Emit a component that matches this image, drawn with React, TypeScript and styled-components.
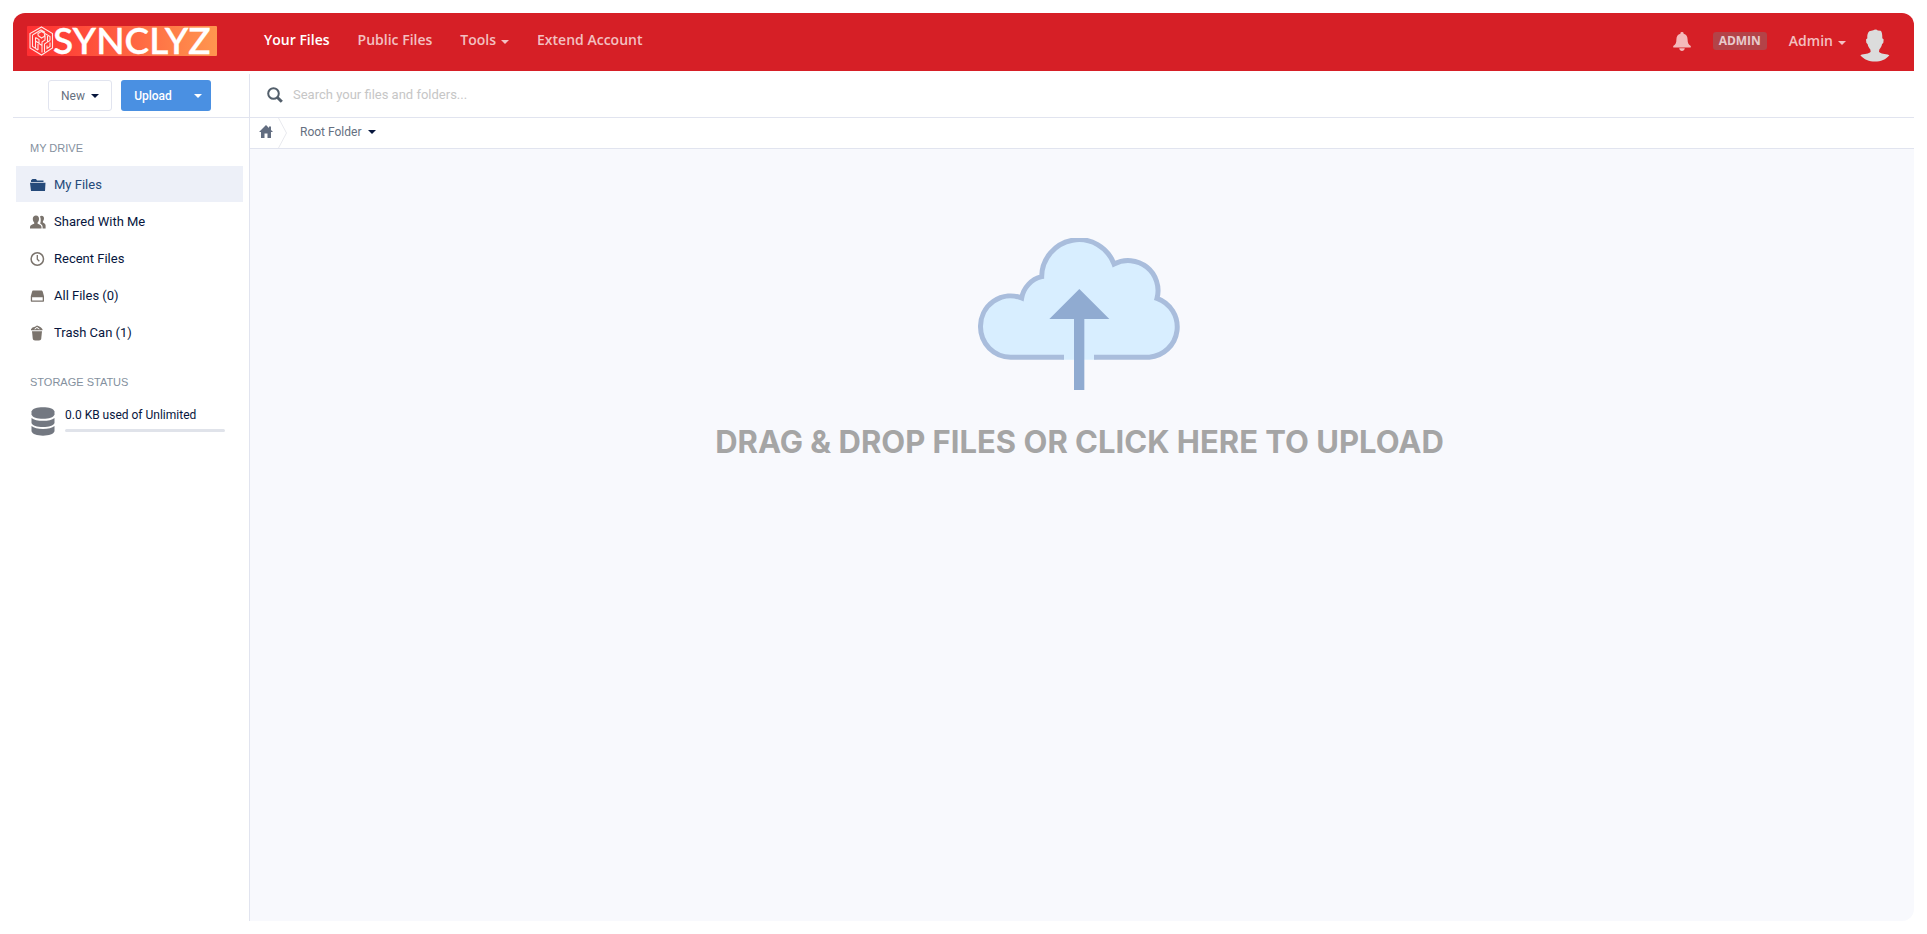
import React from "react";
import styled, { createGlobalStyle } from "styled-components";

const color = {
  red: "#d61f26",
  line: "#e1e4ef",
  navy: "#07163d",
  slate: "#667080",
  blue: "#4a90e2",
};

const body = `Roboto, "Liberation Sans", sans-serif`;
const heading = `Inter, Roboto, sans-serif`;
const menu = `"Open Sans", Roboto, sans-serif`;

const GlobalStyle = createGlobalStyle`
  *, *::before, *::after { box-sizing: border-box; }
  body { margin: 0; background: #fff; color: ${color.navy}; font: 13px/20px ${body}; }
  a { color: inherit; text-decoration: none; }
  button { margin: 0; padding: 0; border: 0; background: none; color: inherit; font: inherit; cursor: pointer; }
  ul { margin: 0; padding: 0; list-style: none; }
  svg { display: block; flex: none; }
`;

const Page = styled.div`
  display: flex;
  flex-direction: column;
  min-height: 100vh;
  padding: 13px;
`;

const Header = styled.header`
  display: flex;
  align-items: center;
  height: 58px;
  padding: 0 24px 2px 14px;
  border-radius: 12px 12px 0 0;
  background: ${color.red};
  color: rgba(255, 255, 255, 0.72);
  font: 600 14px/20px ${menu};
`;

const LogoLink = styled.a`
  width: 190px;

  svg { overflow: visible; }
`;

const Nav = styled.nav`
  display: flex;
  gap: 28px;
  margin-left: 47px;
  padding-bottom: 2px;
`;

const NavLink = styled.a<{ $active?: boolean }>`
  color: ${(p) => (p.$active ? "#fff" : "inherit")};
`;

const MenuButton = styled.button`
  display: flex;
  align-items: center;
  gap: 5px;
`;

const Caret = styled.span<{ $tone?: string }>`
  width: 0;
  height: 0;
  border: 4px solid transparent;
  border-top-color: ${(p) => p.$tone ?? "currentColor"};
  border-bottom: 0;

  ${Header} & { margin-top: 4px; }
`;

const Account = styled.div`
  display: flex;
  align-items: center;
  gap: 22px;
  margin-left: auto;
`;

const Badge = styled.span`
  padding: 0 6px;
  border-radius: 3px;
  background: #b34348;
  color: #e8cbcd;
  font: 700 12px/18px ${menu};
`;

const AvatarButton = styled.button`
  margin: 8px 0 0 -8px;
`;

const Body = styled.div`
  display: grid;
  flex: 1;
  grid-template-columns: 236px minmax(0, 1fr);
  padding-top: 3px;
`;

const Sidebar = styled.aside`
  display: flex;
  flex-direction: column;
`;

const Actions = styled.div`
  display: flex;
  justify-content: center;
  gap: 9px;
  height: 44px;
  padding: 6px 3px 0 0;
  border-bottom: 1px solid ${color.line};
  font-size: 12px;
`;

const NewButton = styled.button`
  display: flex;
  align-items: center;
  justify-content: center;
  gap: 6px;
  width: 64px;
  height: 31px;
  border: 1px solid ${color.line};
  border-radius: 3px;
  color: ${color.slate};
`;

const UploadGroup = styled.div`
  display: flex;
  height: 31px;
  border-radius: 3px;
  background: ${color.blue};
  color: #fff;
  font-weight: 500;
`;

const UploadButton = styled.button`
  width: 64px;
`;

const UploadMenu = styled.button`
  display: flex;
  align-items: center;
  justify-content: center;
  width: 26px;
`;

const Section = styled.section`
  padding: 20px 6px 2px 3px;
`;

const SectionTitle = styled.h2`
  margin: 0 0 8px;
  padding-left: 14px;
  color: #84909e;
  font: 400 11px/20px "Liberation Sans", Arial, sans-serif;
`;

const DriveList = styled.ul`
  display: grid;
  gap: 1px;
`;

const DriveLink = styled.a<{ $active?: boolean }>`
  display: flex;
  align-items: center;
  gap: 8px;
  height: 36px;
  padding: 2px 0 0 14px;
  background: ${(p) => (p.$active ? "#edf0f8" : "transparent")};
  color: ${(p) => (p.$active ? "#254a7a" : color.navy)};

  svg {
    color: ${(p) => (p.$active ? "#254a7a" : "#7a736c")};
  }
`;

const Storage = styled.div`
  display: flex;
  gap: 10px;
  margin-top: 15px;
  padding: 0 18px 0 15px;
  font-size: 12px;
`;

const Quota = styled.div`
  flex: 1;
`;

const QuotaText = styled.label`
  display: block;
  line-height: 16px;
`;

const QuotaBar = styled.progress`
  display: block;
  appearance: none;
  width: 100%;
  height: 3px;
  margin-top: 6px;
  border: 0;
  border-radius: 2px;
  overflow: hidden;
  background: #e0e3ea;

  &::-webkit-progress-bar { background: #e0e3ea; }
  &::-webkit-progress-value { background: ${color.blue}; }
`;

const Main = styled.main`
  display: flex;
  flex-direction: column;
  border-left: 1px solid ${color.line};
`;

const Search = styled.form`
  display: flex;
  align-items: center;
  gap: 10px;
  height: 44px;
  padding: 0 17px 2px;
  border-bottom: 1px solid ${color.line};
`;

const SearchInput = styled.input`
  flex: 1;
  padding: 0;
  border: 0;
  outline: 0;
  color: ${color.navy};
  font: inherit;

  &::placeholder { color: #c6c6c6; opacity: 1; }
`;

const Breadcrumbs = styled.nav`
  display: flex;
  height: 31px;
  padding-left: 9px;
  border-bottom: 1px solid ${color.line};
  color: ${color.slate};
  font-size: 12px;
`;

const HomeLink = styled.a`
  padding-top: 7px;
`;

const Crumb = styled(MenuButton)`
  gap: 7px;
  margin-left: 13px;
  padding-bottom: 2px;
`;

const Separator = styled.svg`
  margin-left: 5px;
`;

const DropZone = styled.button`
  display: flex;
  flex: 1;
  flex-direction: column;
  align-items: center;
  justify-content: flex-start;
  gap: 32px;
  padding: 89px 5px 40px 0;
  border-radius: 0 0 12px 0;
  background: #f8f9fd;
  color: #a5a5a5;
  font: 700 31px/40px ${heading};
`;

function Logo() {
  return (
    <svg width="190" height="30" viewBox="0 0 190 30" role="img" aria-label="Synclyz">
      <defs>
        <linearGradient id="logoFill" x1="0" y1="0" x2="1" y2="0">
          <stop offset="0" stopColor="#ff2f32" />
          <stop offset="0.5" stopColor="#ff6040" />
          <stop offset="1" stopColor="#ff964f" />
        </linearGradient>
      </defs>
      <rect width="190" height="30" rx="1" fill="url(#logoFill)" />
      <g fill="none" stroke="#ffe6e4" strokeWidth="1.1">
        <path d="M14.500 1 25.500 7.500V22L14.500 29 3 22V7.500Z" />
        <path d="M5.500 9v11.500l3 1.800V11.500M5.500 9l8.500-5 4 2.300M11 9.500v-2l3.500-2 8.500 5v4M8.500 11.500l3.500 2v4l3 2v7M11 24l-2.500-1.500M11 9.500l3.500 2.500 3.500-2v4l-3 2v3.500M20.500 10v6l-3 2v8M23 16.500v4l-3 2v-3M8.500 15l3 2M20.500 16l2.500-1.500M17.500 8v2M11 18v6" />
      </g>
      <text x="26" y="28" fill="#fff" stroke="#fff" strokeWidth="0.3" fontFamily="Lato, sans-serif" fontSize="37">SYNCLYZ</text>
    </svg>
  );
}

function BellIcon() {
  return (
    <svg width="18" height="19" viewBox="0 0 18 19" fill="#f4b9bb" aria-hidden="true">
      <path d="M9 0a1.600 1.600 0 0 1 1.600 1.800C13.400 2.500 14.600 4.800 14.600 7.500c0 3.700.9 5 2.900 6.300.5.400.5 1.700 0 1.700H.5c-.5 0-.5-1.300 0-1.700 2-1.300 2.900-2.600 2.900-6.300 0-2.700 1.200-5 4-5.700A1.600 1.600 0 0 1 9 0ZM6.200 16.200h5.600C11.500 18 10.400 19 9 19s-2.500-1-2.800-2.800Z" />
    </svg>
  );
}

function Avatar() {
  return (
    <svg width="30" height="33" viewBox="30 26 90 98" fill="#dcdcdc" aria-hidden="true">
      <path d="M58 32 70 29 75 27 81 28 83 30 92 31C96 34 97 42 97 53L101 57 100 67 96 71C95 77 92 82 88 87L87 94C92 101 105 99 118 104 108 117 92 123 75 123S42 117 31 104C44 99 57 101 62 94L61 87C57 82 54 77 53 71L49 67 48 57 52 53C51 44 53 36 58 32Z" />
    </svg>
  );
}

function SearchIcon() {
  return (
    <svg width="16" height="16" viewBox="0 0 16 16" fill="none" stroke="#535f6b" aria-hidden="true">
      <circle cx="6.500" cy="6.500" r="5.300" strokeWidth="2" />
      <path d="m10.200 10.200 4.600 4.600" strokeWidth="3" />
    </svg>
  );
}

function HomeIcon() {
  return (
    <svg width="14" height="13" viewBox="0 0 14 13" fill="#626d80" aria-hidden="true">
      <path d="M7 0 0 7h2v6h3.500V8.500h3V13H12V7h2l-2-2V1.500h-2V3Z" />
    </svg>
  );
}

function FolderIcon() {
  return (
    <svg width="16" height="14" viewBox="0 0 16 14" fill="currentColor" aria-hidden="true">
      <path d="M1 4V2.200L2.500 1H6l1 1.500h6.500V4ZM0 4.800h15.500L15 13H1Z" />
    </svg>
  );
}

function PeopleIcon() {
  return (
    <svg width="16" height="14" viewBox="0 0 16 14" fill="currentColor" aria-hidden="true">
      <path d="M6 .5c2 0 3 1.300 3 3.200 0 1.700-.6 3-1.400 3.700v1.300c1.700.9 3.900 1.300 3.900 3.300v1.500H0V12c0-2 2.300-2.400 4.200-3.300V7.400C3.400 6.700 2.800 5.400 2.800 3.700 2.800 1.800 4 .5 6 .5Z" />
      <path d="M10 1.600c.4-.7 1-.9 1.600-.9 1.500 0 2.400 1 2.400 2.600 0 1.400-.5 2.400-1.100 3v1.200c1.400.8 2.700 1.300 2.700 3v3h-3V12c0-1.800-1-2.600-2.400-3.500.6-1.700.9-4.500-.2-6.900Z" />
    </svg>
  );
}

function ClockIcon() {
  return (
    <svg width="16" height="14" viewBox="0 0 16 14" fill="none" stroke="currentColor" aria-hidden="true">
      <circle cx="7.300" cy="7" r="6.200" strokeWidth="1.500" />
      <path d="M7.300 3v4.300l2 2" strokeWidth="1.300" />
    </svg>
  );
}

function DriveIcon() {
  return (
    <svg width="16" height="14" viewBox="0 0 16 14" fill="currentColor" aria-hidden="true">
      <path fillRule="evenodd" d="M3.300 1.500h7.900c.8 0 1.200.4 1.500 1.100L14 7.200v4.500c0 .7-.3 1-1 1H1.800c-.7 0-1-.3-1-1V7.200l1.300-4.600c.2-.7.500-1.100 1.200-1.100ZM2.100 8.300v3.200h10.600V8.300Z" />
    </svg>
  );
}

function TrashIcon() {
  return (
    <svg width="16" height="16" viewBox="0 0 16 16" fill="currentColor" aria-hidden="true">
      <path d="M1 4.200 2.500 2.500 5 1.800 7 .5l2.300 1L11 2.600l1.500 1.600v1H1Zm3 0h1.500L6.800 3l2 1.200H10L7 1.800Z" fillRule="evenodd" />
      <path d="M2 6.200h10L11.200 14c-.3 1.200-1.500 1.500-4.200 1.500S3.100 15.200 2.800 14Z" />
    </svg>
  );
}

function DatabaseIcon() {
  return (
    <svg width="24" height="29" viewBox="0 0 24 29" fill="#737881" aria-hidden="true">
      <path d="M.5 4.500C1.500 1.500 6 .3 12 .3s10.500 1.200 11.500 4.200v3C22.500 10.400 18 11.800 12 11.800S1.500 10.400.5 7.500Z" />
      <path d="M.5 11c2.300 2 6.500 2.800 11.500 2.800S21.200 13 23.500 11v5c-1 2.600-5.500 4-11.500 4S1.500 18.600.5 16Z" />
      <path d="M.5 19c2.300 2 6.500 3 11.500 3s9.200-1 11.500-3v5.300c-1 2.900-5.500 4.400-11.500 4.400S1.500 27.200.5 24.300Z" />
    </svg>
  );
}

function CloudUpload() {
  return (
    <svg width="203" height="152" viewBox="84 84 609 456" aria-hidden="true">
      <path
        fill="#d8eeff"
        d="M182 441A91 91 0 0 1 91 350A91 91 0 0 1 215 264A80 80 0 0 1 275 200A112 112 0 0 1 492 162A90 90 0 0 1 621 265A91 91 0 0 1 598 441H440V449H335V441Z"
      />
      <path
        fill="none"
        stroke="#a9bddc"
        strokeWidth="15"
        d="M342 441.500H182A90.500 91 0 0 1 91.500 350A90.500 91 0 0 1 215 264A80 80 0 0 1 275 200A112 112 0 0 1 492 162A90 90 0 0 1 621 265A91 91 0 0 1 598 441.500H432"
      />
      <path fill="#90abd1" d="M388 237 478 327H403V540H372V327H298Z" />
    </svg>
  );
}

const driveItems = [
  { label: "My Files", icon: <FolderIcon />, active: true },
  { label: "Shared With Me", icon: <PeopleIcon /> },
  { label: "Recent Files", icon: <ClockIcon /> },
  { label: "All Files (0)", icon: <DriveIcon /> },
  { label: "Trash Can (1)", icon: <TrashIcon /> },
];

export default function App() {
  return (
    <>
      <GlobalStyle />
      <Page>
        <Header>
          <LogoLink href="#"><Logo /></LogoLink>
          <Nav>
            <NavLink href="#" $active>Your Files</NavLink>
            <NavLink href="#">Public Files</NavLink>
            <MenuButton type="button">Tools <Caret /></MenuButton>
            <NavLink href="#">Extend Account</NavLink>
          </Nav>
          <Account>
            <button type="button" aria-label="Notifications"><BellIcon /></button>
            <Badge>ADMIN</Badge>
            <MenuButton type="button">Admin <Caret /></MenuButton>
            <AvatarButton type="button" aria-label="Profile"><Avatar /></AvatarButton>
          </Account>
        </Header>
        <Body>
          <Sidebar>
            <Actions>
              <NewButton type="button">New <Caret $tone={color.navy} /></NewButton>
              <UploadGroup>
                <UploadButton type="button">Upload</UploadButton>
                <UploadMenu type="button" aria-label="Upload options"><Caret /></UploadMenu>
              </UploadGroup>
            </Actions>
            <Section>
              <SectionTitle>MY DRIVE</SectionTitle>
              <DriveList>
                {driveItems.map((item) => (
                  <li key={item.label}>
                    <DriveLink href="#" $active={item.active}>
                      {item.icon}
                      {item.label}
                    </DriveLink>
                  </li>
                ))}
              </DriveList>
            </Section>
            <Section>
              <SectionTitle>STORAGE STATUS</SectionTitle>
              <Storage>
                <DatabaseIcon />
                <Quota>
                  <QuotaText htmlFor="quota">0.0 KB used of Unlimited</QuotaText>
                  <QuotaBar id="quota" value={0} max={100} />
                </Quota>
              </Storage>
            </Section>
          </Sidebar>
          <Main>
            <Search>
              <SearchIcon />
              <SearchInput type="text" aria-label="Search" placeholder="Search your files and folders..." />
            </Search>
            <Breadcrumbs aria-label="Breadcrumb">
              <HomeLink href="#" aria-label="Home"><HomeIcon /></HomeLink>
              <Separator width="9" height="30" viewBox="0 0 9 30" fill="none" stroke="#e8e9ee" aria-hidden="true">
                <path d="M.500 0 8.500 15 .500 30" />
              </Separator>
              <Crumb type="button">Root Folder <Caret $tone={color.navy} /></Crumb>
            </Breadcrumbs>
            <DropZone type="button">
              <CloudUpload />
              DRAG &amp; DROP FILES OR CLICK HERE TO UPLOAD
            </DropZone>
          </Main>
        </Body>
      </Page>
    </>
  );
}
